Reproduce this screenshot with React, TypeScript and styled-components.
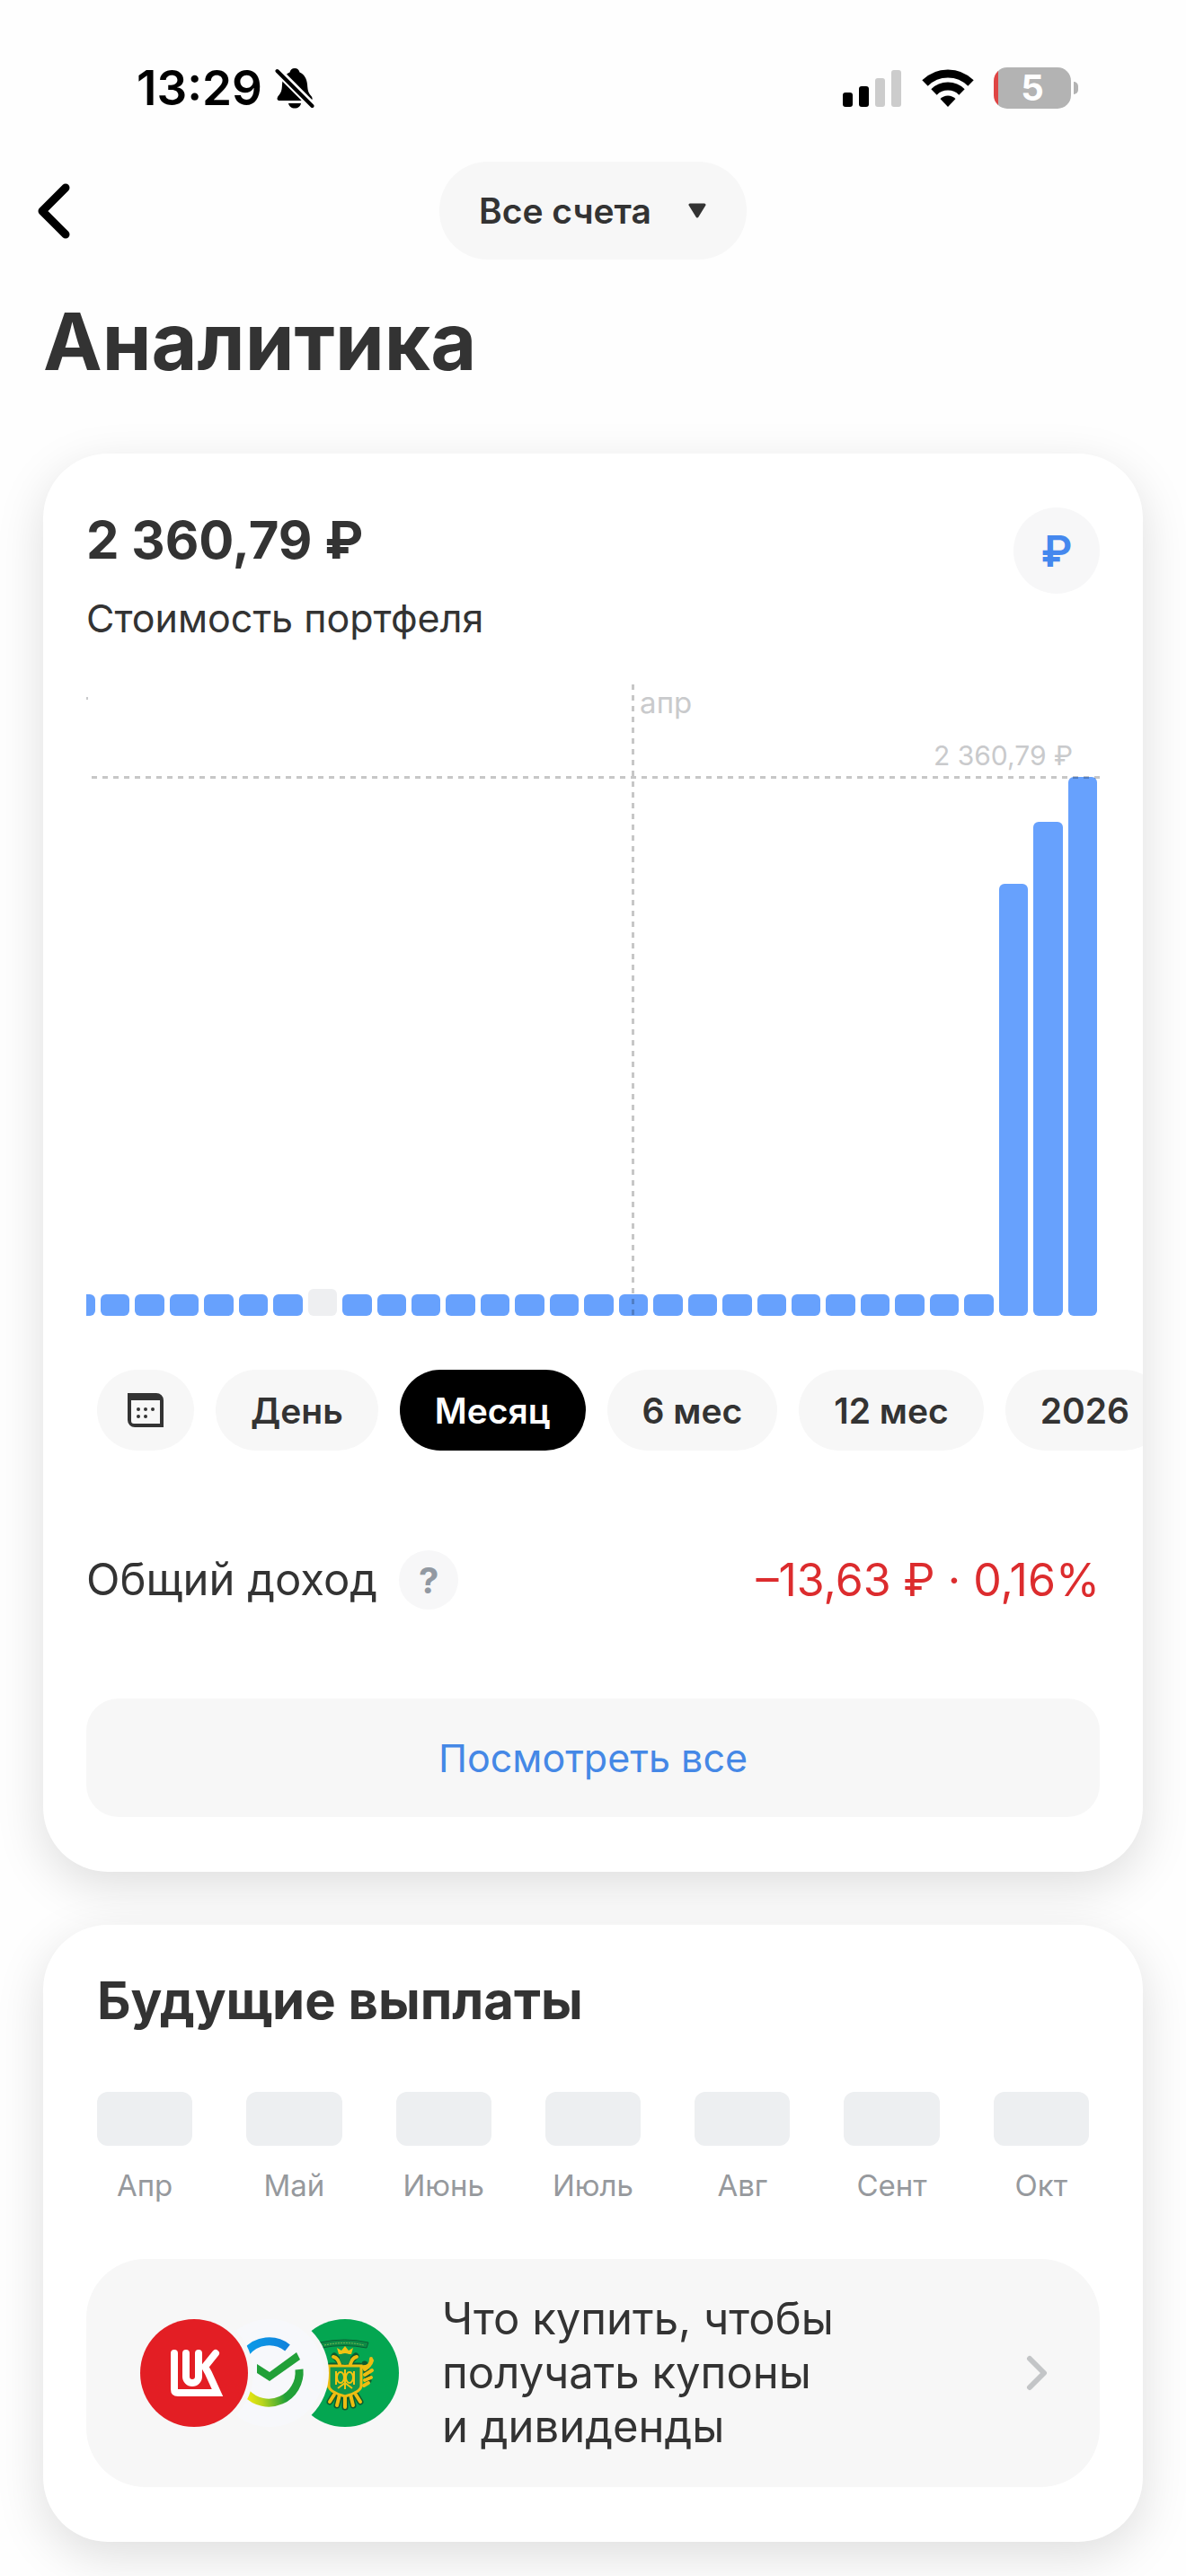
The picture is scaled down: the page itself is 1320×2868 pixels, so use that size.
import { useState } from 'react'
import styled, { createGlobalStyle } from 'styled-components'

const GlobalStyle = createGlobalStyle`
  * {
    box-sizing: border-box;
  }

  body {
    margin: 0;
    background: #fefefe;
    color: #333;
    font-family: Inter, 'Noto Sans', sans-serif;
    overflow-x: hidden;
  }

  button, select {
    border: 0;
    padding: 0;
    color: inherit;
    font-family: inherit;
    cursor: pointer;
  }

  svg {
    display: block;
    flex-shrink: 0;
  }
`

const Page = styled.div`
  padding-bottom: 38px;
`

const StatusBar = styled.div`
  display: flex;
  align-items: center;
  justify-content: space-between;
  height: 180px;
  padding: 16px 120px 0 152px;
`

const StatusGroup = styled.div<{ $gap: number }>`
  display: flex;
  align-items: center;
  gap: ${({ $gap }) => $gap}px;
`

const Time = styled.time`
  color: #000;
  font-size: 53px;
  font-weight: 600;
  line-height: 60px;
`

const Battery = styled.div`
  display: flex;
  align-items: center;
  gap: 3px;
`

const BatteryBody = styled.div`
  width: 86px;
  height: 46px;
  border-radius: 15px;
  background: linear-gradient(90deg, #df4544 5px, #b3b3b3 5px);
  color: #fff;
  font-size: 40px;
  font-weight: 700;
  line-height: 46px;
  text-align: center;
`

const BatteryTip = styled.div`
  width: 5px;
  height: 14px;
  border-radius: 0 6px 6px 0;
  background: #b3b3b3;
`

const Header = styled.header`
  display: grid;
  grid-template-columns: 1fr auto 1fr;
  align-items: center;
  padding: 0 38px;
`

const BackButton = styled.button`
  justify-self: start;
  background: none;
`

const AccountPicker = styled.div`
  position: relative;
  display: flex;
  align-items: center;

  svg {
    position: absolute;
    right: 45px;
    pointer-events: none;
  }
`

const AccountSelect = styled.select`
  appearance: none;
  height: 109px;
  padding: 0 106px 0 44px;
  border-radius: 54px;
  background: #f7f7f7;
  font-size: 39px;
  font-weight: 600;
`

const PageTitle = styled.h1`
  margin: 39px 48px 73px;
  font-size: 88px;
  font-weight: 700;
  line-height: 104px;
`

const Cards = styled.main`
  display: flex;
  flex-direction: column;
  gap: 59px;
  padding: 0 48px;
`

const Card = styled.section<{ $top: number }>`
  padding: ${({ $top }) => $top}px 48px 61px;
  border-radius: 72px;
  background: #fff;
  box-shadow: 0 16px 54px rgba(0, 0, 0, 0.13);
`

const CardHead = styled.div`
  display: flex;
  align-items: flex-start;
  justify-content: space-between;
  margin-bottom: 47px;
`

const Amount = styled.h2`
  margin: 0 0 24px;
  font-size: 58px;
  font-weight: 700;
  line-height: 72px;
`

const Caption = styled.p`
  margin: 0;
  font-size: 43px;
  line-height: 54px;
`

const RoundButton = styled.button<{ $size: number; $color: string }>`
  width: ${({ $size }) => $size}px;
  height: ${({ $size }) => $size}px;
  border-radius: 50%;
  background: #f7f7f8;
  color: ${({ $color }) => $color};
  font-size: ${({ $size }) => ($size > 80 ? 48 : 40)}px;
  font-weight: ${({ $size }) => ($size > 80 ? 600 : 700)};
`

const Chart = styled.div`
  position: relative;
  height: 703px;
`

const Bars = styled.div`
  display: grid;
  grid-template-columns: 10px repeat(29, 1fr);
  align-items: end;
  gap: 6px;
  height: 100%;
  padding-right: 3px;
`

const Bar = styled.div<{ $empty: boolean; $cut: boolean }>`
  border-radius: ${({ $cut }) => ($cut ? '0 6px 6px 0' : '6px')};
  background: ${({ $empty }) => ($empty ? '#eeeff1' : '#67a1fd')};
`

/* month boundary, drawn over the bars */
const MonthLine = styled.div`
  position: absolute;
  top: 0;
  bottom: 0;
  left: 54%;
  width: 3px;
  margin-left: -2px;
  background: repeating-linear-gradient(180deg, rgba(0, 0, 0, 0.22) 0 6px, transparent 6px 12px);
`

const MonthName = styled.span`
  position: absolute;
  top: 0;
  left: 54%;
  padding-left: 7px;
  color: #c9cacc;
  font-size: 33px;
  line-height: 40px;
`

/* what is left of the previous month's name at the edge */
const MonthTail = styled.div`
  position: absolute;
  top: 14px;
  left: 0;
  width: 2px;
  height: 3px;
  background: #c9cacc;
`

const MaxLine = styled.div`
  position: absolute;
  top: 102px;
  right: 0;
  left: 6px;
  height: 3px;
  background: repeating-linear-gradient(90deg, rgba(0, 0, 0, 0.22) 0 6px, transparent 6px 12px);
`

const MaxValue = styled.span`
  position: absolute;
  top: 61px;
  right: 30px;
  color: #c9cacc;
  font-size: 30px;
  line-height: 36px;
`

const Periods = styled.div`
  display: flex;
  gap: 24px;
  margin: 60px -48px 111px 12px;
  overflow: hidden;
`

const Period = styled.button<{ $active?: boolean }>`
  display: flex;
  flex-shrink: 0;
  align-items: center;
  height: 90px;
  padding: 0 39px;
  border-radius: 45px;
  background: ${({ $active }) => ($active ? '#000' : '#f7f7f7')};
  color: ${({ $active }) => ($active ? '#fff' : '#333')};
  font-size: 39px;
  font-weight: 600;
  white-space: nowrap;
`

const CalendarButton = styled(Period)`
  padding: 0 34px;
`

const IncomeRow = styled.div`
  display: flex;
  align-items: center;
  justify-content: space-between;
  margin-bottom: 99px;
  font-size: 49px;
  line-height: 66px;
`

const IncomeName = styled.div`
  display: flex;
  align-items: center;
  gap: 24px;
`

const Loss = styled.span`
  color: #dc2c2e;
  font-size: 50px;
`

const ShowAll = styled.button`
  width: 100%;
  height: 132px;
  border-radius: 36px;
  background: #f7f7f7;
  color: #4588e6;
  font-size: 43px;
`

const CardTitle = styled.h2`
  margin: 0 12px 66px;
  font-size: 58px;
  font-weight: 700;
  line-height: 72px;
`

const Months = styled.ul`
  display: grid;
  grid-template-columns: repeat(7, 1fr);
  gap: 60px;
  margin: 0 12px 61px;
  padding: 0;
  list-style: none;
`

const Month = styled.li`
  display: flex;
  flex-direction: column;
  align-items: center;
  gap: 23px;
  color: #96999d;
  font-size: 33px;
  line-height: 42px;
`

const MonthBox = styled.div`
  align-self: stretch;
  height: 60px;
  border-radius: 12px;
  background: #edeff1;
`

const Banner = styled.a`
  display: flex;
  align-items: center;
  gap: 48px;
  min-height: 254px;
  padding: 36px 54px 36px 60px;
  border-radius: 66px;
  background: #f7f7f7;
  color: inherit;
  text-decoration: none;
`

const BannerText = styled.span`
  flex: 1;
  font-size: 49px;
  line-height: 60px;
`

const BellOffIcon = () => (
  <svg width='44' height='46' viewBox='0 0 44 46'>
    <path
      d='M22 1c-3 0-5 2-5.500 4.500C11 8 8.500 13 8 19c-.3 7-1 9-4 12.500-2.500 3-1.500 5.500 1 5.500h34c3 0 3.500-3 1-5.500-3-3.500-3.500-6-4-12.500-.5-6-3-11-8.500-13.500C27 3 25 1 22 1z'
      fill='#000'
    />
    <path d='M15 40h14c-.5 3.500-3.500 5.500-7 5.500s-6.500-2-7-5.500z' fill='#000' />
    <path d='M3 4l39 39' stroke='#fefefe' strokeWidth='9' />
    <path d='M2.500 4l39 39' stroke='#000' strokeWidth='4' strokeLinecap='round' />
  </svg>
)

const SignalIcon = () => (
  <svg width='66' height='42' viewBox='0 0 66 42'>
    <rect x='0' y='26' width='11' height='16' rx='3' fill='#000' />
    <rect x='18' y='19' width='11' height='23' rx='3' fill='#000' />
    <rect x='36' y='10' width='11' height='32' rx='3' fill='#ccc' />
    <rect x='54' y='1' width='11' height='41' rx='3' fill='#ccc' />
  </svg>
)

const WifiIcon = () => (
  <svg width='58' height='42' viewBox='0 0 58 42'>
    <g fill='none' stroke='#000' strokeWidth='9'>
      <path d='M3.500 15.500a36 36 0 0 1 51 0' />
      <path d='M13.500 25.500a22 22 0 0 1 31 0' />
    </g>
    <path d='M20.500 33a12 12 0 0 1 17 0L29 42z' fill='#000' />
  </svg>
)

const CalendarIcon = () => (
  <svg width='40' height='38' viewBox='0 0 40 38' fill='#333'>
    <path
      fillRule='evenodd'
      d='M0 0h32a8 8 0 0 1 8 8v30H8a8 8 0 0 1-8-8zM4 8v23a3 3 0 0 0 3 3h29V8z'
    />
    <circle cx='12' cy='18' r='2' />
    <circle cx='20' cy='18' r='2' />
    <circle cx='28' cy='18' r='2' />
    <circle cx='12' cy='26' r='2' />
    <circle cx='20' cy='26' r='2' />
  </svg>
)

const CompanyLogos = () => (
  <svg width='288' height='120' viewBox='0 0 288 120'>
    <defs>
      <linearGradient id='sberTop' x1='0' x2='1'>
        <stop offset='0' stopColor='#0a9be8' />
        <stop offset='1' stopColor='#1283dc' />
      </linearGradient>
      <linearGradient id='sberBottom' gradientUnits='userSpaceOnUse' x1='120' y1='94' x2='172' y2='84'>
        <stop offset='0' stopColor='#f0e80f' />
        <stop offset='0.3' stopColor='#b9d51c' />
        <stop offset='0.8' stopColor='#21a038' />
      </linearGradient>
      <mask id='behindFirst'>
        <rect width='288' height='120' fill='#fff' />
        <circle cx='60' cy='60' r='66' fill='#000' />
      </mask>
      <mask id='behindSecond'>
        <rect width='288' height='120' fill='#fff' />
        <circle cx='144' cy='60' r='66' fill='#000' />
      </mask>
    </defs>

    <circle cx='60' cy='60' r='60' fill='#e31e24' />
    <g fill='none' stroke='#fff' strokeWidth='8' strokeLinecap='round'>
      <path d='M38 38v40q0 4 4 4h44L76 60l-4-7 12-15' />
      <path d='M51 38v26a7 7 0 0 0 14 0V38' />
    </g>

    <g mask='url(#behindFirst)'>
      <circle cx='144' cy='60' r='60' fill='#f7f8fb' />
      <path d='M118 37a33 33 0 0 1 46-5' fill='none' stroke='url(#sberTop)' strokeWidth='9' />
      <path d='M177 56A34 34 0 0 1 118 82' fill='none' stroke='url(#sberBottom)' strokeWidth='9' />
      <path d='M130 50l14 9 30-22 4 8-34 24-14-9z' fill='#21a038' />
    </g>

    <g mask='url(#behindSecond)'>
      <circle cx='228' cy='60' r='60' fill='#04a651' />
      <path d='M200 26q28-6 54 0l-2 6q-25-5-50 0z' fill='#0d8a45' stroke='#0b5f33' strokeWidth='1' />
      <path d='M205 29q23-5 44 0' fill='none' stroke='#7fbf55' strokeWidth='1' strokeDasharray='2 1' />
      <path d='M221 39l-2-7 5 3 4-5 4 5 5-3-2 7z' fill='#f3c313' />
      <g fill='none' stroke='#0d5c2e' strokeWidth='7' strokeLinecap='round'>
        <path d='M216 41q4 4 8 8M240 41q-4 4-8 8M212 52h32M206 56l-4 16M250 50l4 18' />
        <path d='M216 84l-5 8M222 84l-3 12M228 84v14M234 84l3 12M240 84l5 8' />
      </g>
      <g fill='none' stroke='#eebd12' strokeWidth='4' strokeLinecap='round'>
        <path d='M215 42q5 1 7 8M241 42q-5 1-7 8' />
        <path d='M198 48q4 8 14 5M258 46q-2 9-14 7' />
        <path d='M250 56q7-4 7-12M250 62l8-5M250 68l7-3M249 74l5-3M207 61v14' />
        <path d='M216 84l-5 8M222 84l-3 12M228 84v14M234 84l3 12M240 84l5 8' />
      </g>
      <path
        d='M210 52h36v22q0 7-18 12-18-5-18-12z'
        fill='#12964a'
        stroke='#eebd12'
        strokeWidth='3'
      />
      <g fill='none' stroke='#f3c313' strokeWidth='2'>
        <ellipse cx='223' cy='65' rx='4' ry='6' />
        <ellipse cx='233' cy='65' rx='4' ry='6' />
        <path d='M228 56v22M218 58v15M238 58v15M220 77l8-6 8 6' />
      </g>
      <path d='M222 40q6-4 12 0v5q-1 5-6 6-5-1-6-6z' fill='#129048' />
    </g>
  </svg>
)

const MAX_VALUE = 2360.79
const PLOT_HEIGHT = 600
const MIN_BAR = 24
const EMPTY_BAR = 30
const EMPTY_DAY = 7

// one value per day, the last three days hold the money
const days = [...Array(27).fill(0), 1892, 2164, MAX_VALUE]

const barHeight = (value: number, day: number) =>
  day === EMPTY_DAY ? EMPTY_BAR : Math.max(MIN_BAR, Math.round((value / MAX_VALUE) * PLOT_HEIGHT))

const periods = ['День', 'Месяц', '6 мес', '12 мес', '2026']
const months = ['Апр', 'Май', 'Июнь', 'Июль', 'Авг', 'Сент', 'Окт']

export default function App() {
  const [period, setPeriod] = useState('Месяц')

  return (
    <Page>
      <GlobalStyle />
      <StatusBar>
        <StatusGroup $gap={14}>
          <Time>13:29</Time>
          <BellOffIcon />
        </StatusGroup>
        <StatusGroup $gap={22}>
          <SignalIcon />
          <WifiIcon />
          <Battery>
            <BatteryBody>5</BatteryBody>
            <BatteryTip />
          </Battery>
        </StatusGroup>
      </StatusBar>

      <Header>
        <BackButton aria-label='Назад'>
          <svg width='44' height='64' viewBox='0 0 44 64' fill='none' stroke='#000' strokeWidth='9'>
            <path d='M35 6L9 32l26 26' strokeLinecap='round' strokeLinejoin='round' />
          </svg>
        </BackButton>
        <AccountPicker>
          <AccountSelect aria-label='Счёт'>
            <option>Все счета</option>
          </AccountSelect>
          <svg width='20' height='17' viewBox='0 0 20 17' fill='#333' stroke='#333' strokeWidth='3'>
            <path d='M2 2h16l-8 13z' strokeLinejoin='round' />
          </svg>
        </AccountPicker>
      </Header>

      <PageTitle>Аналитика</PageTitle>

      <Cards>
        <Card $top={60}>
          <CardHead>
            <div>
              <Amount>2 360,79 ₽</Amount>
              <Caption>Стоимость портфеля</Caption>
            </div>
            <RoundButton $size={96} $color='#4588ee' aria-label='Валюта'>
              ₽
            </RoundButton>
          </CardHead>

          <Chart>
            <Bars>
              {days.map((value, i) => (
                <Bar
                  key={i}
                  $empty={i === EMPTY_DAY}
                  $cut={i === 0}
                  style={{ height: barHeight(value, i) }}
                />
              ))}
            </Bars>
            <MonthTail />
            <MonthLine />
            <MonthName>апр</MonthName>
            <MaxLine />
            <MaxValue>2 360,79 ₽</MaxValue>
          </Chart>

          <Periods>
            <CalendarButton aria-label='Календарь'>
              <CalendarIcon />
            </CalendarButton>
            {periods.map((name) => (
              <Period key={name} $active={name === period} onClick={() => setPeriod(name)}>
                {name}
              </Period>
            ))}
          </Periods>

          <IncomeRow>
            <IncomeName>
              Общий доход
              <RoundButton $size={66} $color='#9299a2' aria-label='Подробнее'>
                ?
              </RoundButton>
            </IncomeName>
            <Loss>–13,63 ₽ · 0,16%</Loss>
          </IncomeRow>

          <ShowAll>Посмотреть все</ShowAll>
        </Card>

        <Card $top={48}>
          <CardTitle>Будущие выплаты</CardTitle>
          <Months>
            {months.map((name) => (
              <Month key={name}>
                <MonthBox />
                {name}
              </Month>
            ))}
          </Months>
          <Banner href='#dividends'>
            <CompanyLogos />
            <BannerText>
              Что купить, чтобы
              <br />
              получать купоны
              <br />и дивиденды
            </BannerText>
            <svg width='30' height='40' viewBox='0 0 30 40' fill='none' stroke='#c3c5c7' strokeWidth='6'>
              <path d='M6 4l16 16L6 36' strokeLinecap='round' strokeLinejoin='round' />
            </svg>
          </Banner>
        </Card>
      </Cards>
    </Page>
  )
}
